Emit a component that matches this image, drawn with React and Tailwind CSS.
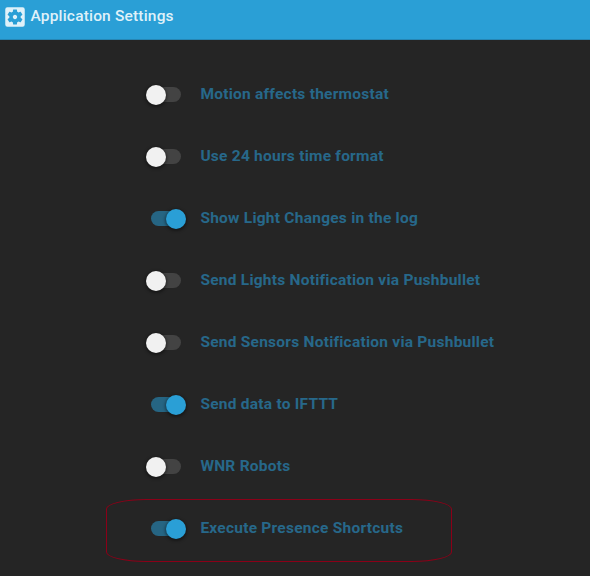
import { MdSettingsApplications } from "react-icons/md";

const settings = [
  { label: "Motion affects thermostat", on: false },
  { label: "Use 24 hours time format", on: false },
  { label: "Show Light Changes in the log", on: true },
  { label: "Send Lights Notification via Pushbullet", on: false },
  { label: "Send Sensors Notification via Pushbullet", on: false },
  { label: "Send data to IFTTT", on: true },
  { label: "WNR Robots", on: false },
  { label: "Execute Presence Shortcuts", on: true, highlighted: true },
];

function Toggle({ on }) {
  return (
    <span className={`flex h-[15px] w-[30px] shrink-0 items-center rounded-full ${on ? "justify-end bg-[#266583]" : "justify-start bg-[#434343]"}`}>
      <span
        className={`mt-px size-5 shrink-0 rounded-full shadow-[0_1px_3px_1px_rgba(0,0,0,0.4)] ${on ? "-mr-[5px] bg-[#2a9fd6]" : "-ml-[5px] bg-[#f1f1f1]"}`}
      />
    </span>
  );
}

export default function App() {
  return (
    <div className="h-[576px] w-[590px] overflow-hidden bg-[#252525] font-['Roboto',sans-serif]">
      <header className="flex h-10 items-start border-b border-[#2686b4] bg-[#2a9fd6] pl-0.5 pt-1 text-[#dff1f9]">
        <MdSettingsApplications className="size-[26px]" />
        <h1 className="ml-[2.5px] text-[15.5px] font-medium leading-6 tracking-[0.18px]">Application Settings</h1>
      </header>
      <main className="flex flex-col pt-[23px]">
        {settings.map((item) => (
          <label key={item.label} className="relative flex h-[62px] items-center pl-[151px]">
            <Toggle on={item.on} />
            <span className="ml-[19.4px] whitespace-nowrap text-[15.5px] leading-6 font-bold tracking-[0.24px] text-[#27688a]">{item.label}</span>
            {item.highlighted && (
              <span className="absolute left-[106px] top-[2px] h-[63px] w-[346px] rounded-[40px/10px] border border-[#8b0018]" />
            )}
          </label>
        ))}
      </main>
    </div>
  );
}
